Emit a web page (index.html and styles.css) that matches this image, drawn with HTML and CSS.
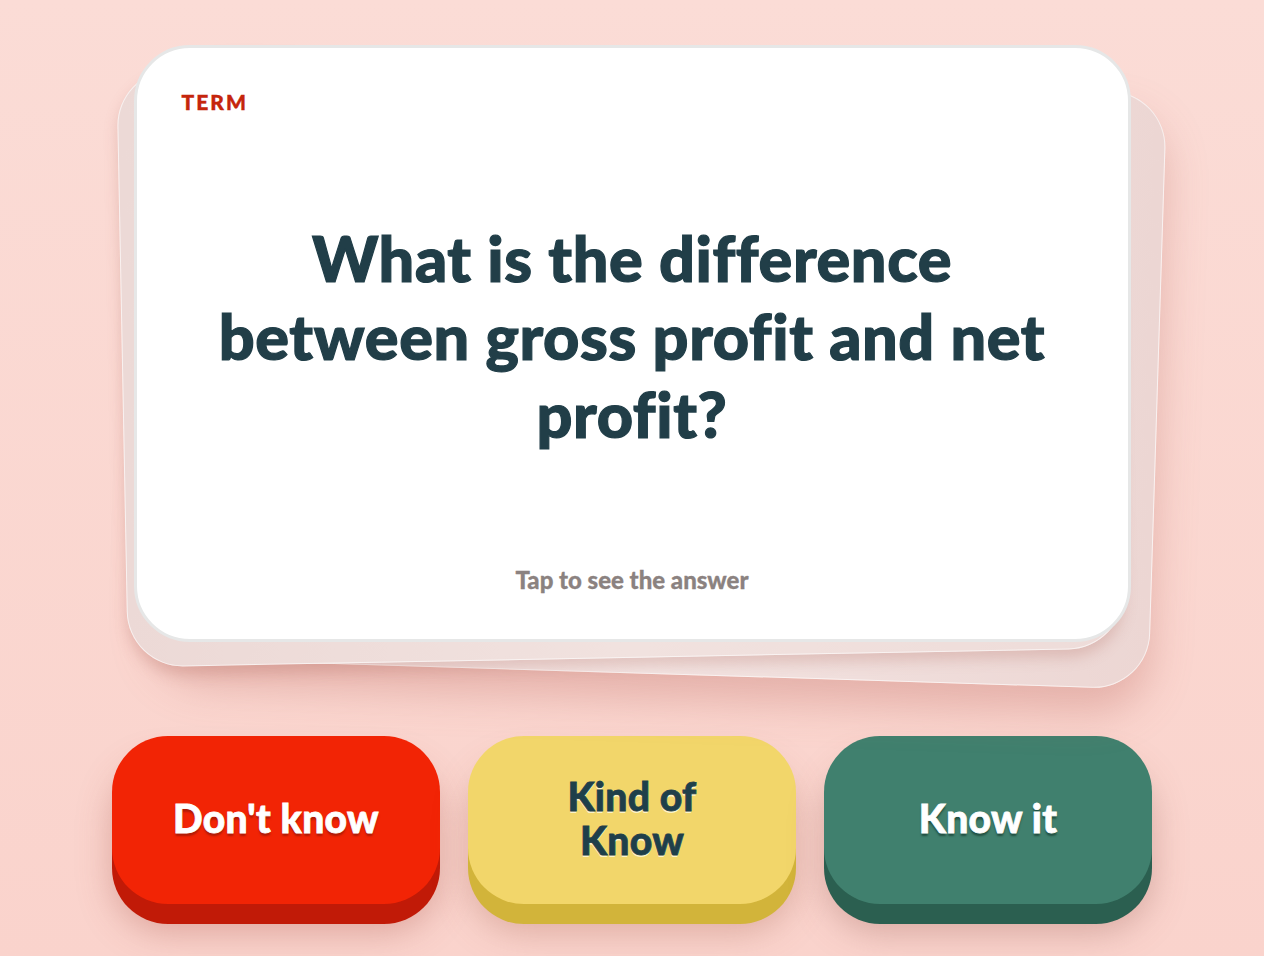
FILE: index.html
```html
<!DOCTYPE html>
<html lang="en">
<head>
<meta charset="utf-8">
<title>Flashcard</title>
<link rel="stylesheet" href="styles.css">
</head>
<body>
<main class="page">
  <section class="stack">
    <div class="back back-c"></div>
    <div class="back back-b"></div>
    <div class="card">
      <div class="label">TERM</div>
      <h1 class="question">What is the difference between gross profit and net profit?</h1>
      <div class="hint">Tap to see the answer</div>
    </div>
  </section>
  <section class="actions">
    <button class="btn btn-red">Don't know</button>
    <button class="btn btn-yellow">Kind of<br>Know</button>
    <button class="btn btn-green">Know it</button>
  </section>
</main>
</body>
</html>
```
FILE: styles.css
```css
* { box-sizing: border-box; }
html, body { margin: 0; padding: 0; }
body {
  width: 1264px;
  height: 956px;
  overflow: hidden;
  background: linear-gradient(180deg, #fbdcd6 0%, #fad3cc 100%);
  font-family: "Lato Black", "Lato", "Noto Sans", sans-serif;
}
.page {
  display: flex;
  flex-direction: column;
  align-items: center;
  padding-top: 45px;
}
.stack {
  position: relative;
  width: 997px;
  height: 597px;
}
.back {
  position: absolute;
  inset: 0;
  border-radius: 56px;
  background: linear-gradient(90deg, #efdcda 0%, #f3e4e2 50%, #ecd6d3 100%);
  border: 1px solid rgba(255,255,255,0.6);
}
.back-c {
  transform: translate(27px, 32px) rotate(1.8deg);
  box-shadow: 0 24px 40px rgba(190, 110, 100, 0.35);
}
.back-b {
  transform: translate(-12px, 16px) rotate(-1.1deg);
  background: linear-gradient(90deg, #ecd9d6 0%, #f1e2df 50%, #eedcd9 100%);
  box-shadow: 0 8px 14px rgba(180, 110, 100, 0.28);
}
.card {
  position: relative;
  height: 100%;
  background: #ffffff;
  border: 3px solid #e6e7e7;
  border-radius: 56px;
  display: flex;
  flex-direction: column;
  align-items: center;
  padding: 43px 45px 46px;
}
.label {
  align-self: flex-start;
  color: #c5250c;
  font-weight: 900;
  font-size: 21px;
  letter-spacing: 2px;
  line-height: 22px;
  -webkit-text-stroke: 0.4px #c5250c;
}
.question {
  margin: 0;
  flex: 1;
  display: flex;
  align-items: center;
  text-align: center;
  max-width: 880px;
  color: #213e48;
  font-weight: 900;
  font-size: 63px;
  line-height: 78px;
  letter-spacing: 0.6px;
  padding: 4px 0 12px;
  -webkit-text-stroke: 1.2px #213e48;
}
.hint {
  color: #8b8280;
  font-weight: 700;
  font-size: 24px;
  line-height: 26px;
  -webkit-text-stroke: 0.3px #8b8280;
}
.actions {
  margin-top: 94px;
  display: grid;
  grid-template-columns: repeat(3, 328px);
  gap: 28px;
}
.btn {
  height: 168px;
  border: none;
  border-radius: 56px;
  font-family: "Lato Black", "Lato", "Noto Sans", sans-serif;
  font-weight: 900;
  font-size: 39px;
  line-height: 44px;
  letter-spacing: 0.3px;
  padding: 0 40px 4px;
  cursor: pointer;
}
.btn-red {
  background: #f22405;
  color: #ffffff;
  -webkit-text-stroke: 0.8px #ffffff;
  text-shadow: 0 3px 2px rgba(120, 20, 10, 0.55);
  box-shadow: 0 20px 0 #c11a07, 0 28px 34px rgba(170, 80, 70, 0.35);
}
.btn-yellow {
  background: #f2d66a;
  color: #1f3f4a;
  -webkit-text-stroke: 0.8px #1f3f4a;
  text-shadow: 0 2px 0 rgba(255, 250, 220, 0.85);
  box-shadow: 0 20px 0 #d2b43a, 0 28px 34px rgba(170, 100, 80, 0.35);
}
.btn-green {
  background: #40806e;
  color: #ffffff;
  -webkit-text-stroke: 0.8px #ffffff;
  text-shadow: 0 3px 2px rgba(10, 40, 30, 0.55);
  box-shadow: 0 20px 0 #2b5f50, 0 28px 34px rgba(150, 90, 80, 0.35);
}
```
